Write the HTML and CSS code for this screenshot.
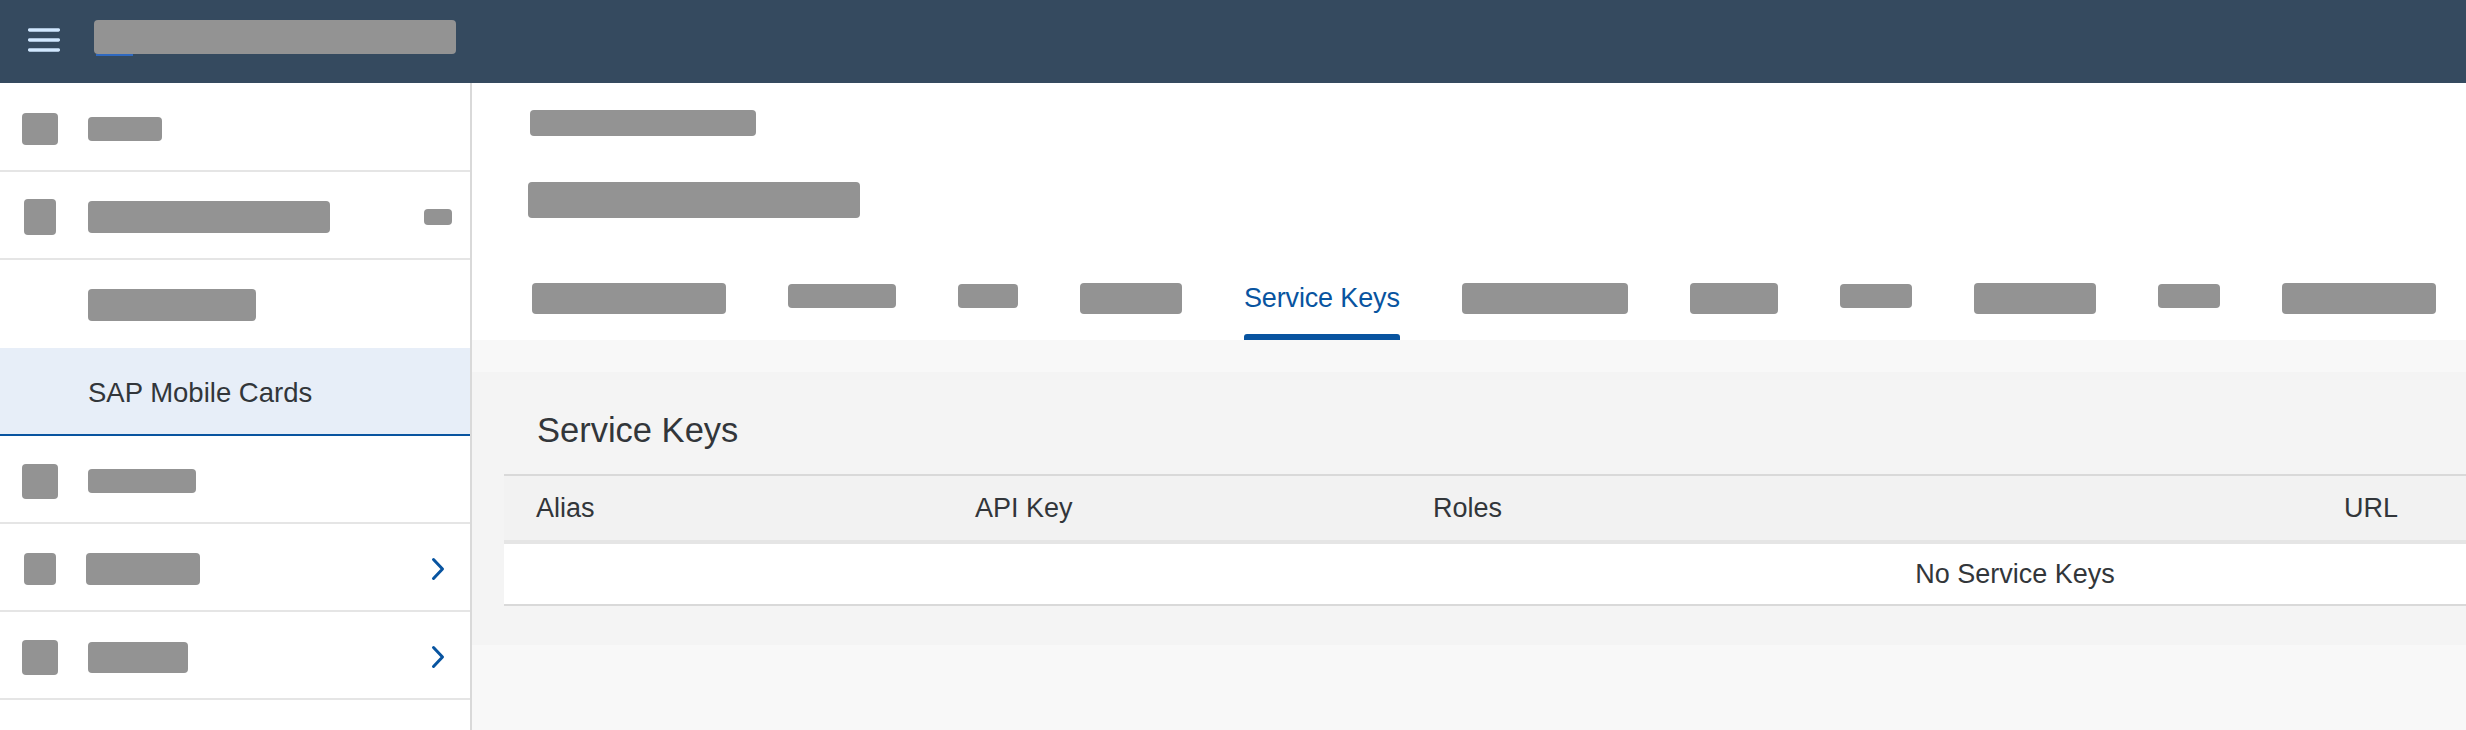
FILE: index.html
```html
<!DOCTYPE html>
<html lang="en">
<head>
<meta charset="utf-8">
<title>Service Keys</title>
<link rel="stylesheet" href="styles.css">
</head>
<body>
<header class="shell">
  <button class="burger" aria-label="Menu">
    <svg width="32" height="24" viewBox="0 0 32 24"><path d="M1.6 2H30.4M1.6 12H30.4M1.6 22H30.4" fill="none" stroke="#d1e8ff" stroke-width="3.3" stroke-linecap="round"/></svg>
  </button>
  <div class="shell-title">
    <span class="ph ph-shell"></span>
    <span class="shell-underline"></span>
  </div>
</header>
<div class="layout">
  <nav class="side">
    <div class="nav-item">
      <span class="nav-icon"><span class="ph i-a"></span></span>
      <span class="ph t1"></span>
    </div>
    <div class="nav-item">
      <span class="nav-icon"><span class="ph i-b"></span></span>
      <span class="ph t2"></span>
      <span class="nav-end"><span class="ph badge"></span></span>
    </div>
    <div class="nav-item child">
      <span class="nav-icon"></span>
      <span class="ph t3"></span>
    </div>
    <div class="nav-item selected">
      <span class="nav-icon"></span>
      <span class="nav-text">SAP Mobile Cards</span>
    </div>
    <div class="nav-item">
      <span class="nav-icon"><span class="ph i-c"></span></span>
      <span class="ph t5"></span>
    </div>
    <div class="nav-item">
      <span class="nav-icon"><span class="ph i-d"></span></span>
      <span class="ph t6"></span>
      <span class="nav-end"><svg class="chev" width="14" height="24" viewBox="0 0 14 24"><path d="M2.5 2.5L11.5 12L2.5 21.5" fill="none" stroke="#0854a0" stroke-width="3" stroke-linecap="round" stroke-linejoin="round"/></svg></span>
    </div>
    <div class="nav-item">
      <span class="nav-icon"><span class="ph i-c"></span></span>
      <span class="ph t7"></span>
      <span class="nav-end"><svg class="chev" width="14" height="24" viewBox="0 0 14 24"><path d="M2.5 2.5L11.5 12L2.5 21.5" fill="none" stroke="#0854a0" stroke-width="3" stroke-linecap="round" stroke-linejoin="round"/></svg></span>
    </div>
  </nav>
  <main class="main">
    <section class="page-head">
      <div class="ph ph-title1"></div>
      <div class="ph ph-title2"></div>
      <div class="tabs">
        <div class="tab"><span class="ph tall w194"></span></div>
        <div class="tab"><span class="ph short w108"></span></div>
        <div class="tab"><span class="ph short w60"></span></div>
        <div class="tab"><span class="ph tall w103"></span></div>
        <div class="tab active"><span class="tab-text">Service Keys</span></div>
        <div class="tab"><span class="ph tall w166"></span></div>
        <div class="tab"><span class="ph tall w88"></span></div>
        <div class="tab"><span class="ph short w72"></span></div>
        <div class="tab"><span class="ph tall w122"></span></div>
        <div class="tab"><span class="ph short w62"></span></div>
        <div class="tab"><span class="ph tall w154"></span></div>
      </div>
    </section>
    <section class="panel">
      <h2 class="sec-title">Service Keys</h2>
      <table class="keys">
        <colgroup>
          <col class="c-alias"><col class="c-api"><col class="c-roles"><col class="c-url">
        </colgroup>
        <thead>
          <tr><th>Alias</th><th>API Key</th><th>Roles</th><th>URL</th></tr>
        </thead>
        <tbody>
          <tr><td class="empty" colspan="4">No Service Keys</td></tr>
        </tbody>
      </table>
    </section>
  </main>
</div>
</body>
</html>
```
FILE: styles.css
```css
html, body {
  margin: 0;
  padding: 0;
  height: 100%;
  overflow: hidden;
}
body {
  font-family: "Liberation Sans", Arial, sans-serif;
  color: #32363a;
  background: #f8f8f8;
}

.ph {
  display: block;
  background: #939393;
  border-radius: 4px;
  flex: none;
}

/* Shell header */
.shell {
  height: 83px;
  background: #354a5f;
  display: flex;
  align-items: flex-start;
  padding-left: 28px;
  box-sizing: border-box;
}
.burger {
  border: 0;
  padding: 0;
  margin: 28px 0 0 0;
  background: none;
  width: 32px;
  height: 24px;
  display: block;
}
.burger svg { display: block; }
.shell-title {
  margin: 20px 0 0 34px;
  display: flex;
  flex-direction: column;
}
.ph-shell { width: 362px; height: 34px; }
.shell-underline {
  width: 37px;
  height: 2px;
  margin-left: 2px;
  background: #2f69c0;
}

/* Layout */
.layout {
  display: flex;
  height: calc(100vh - 83px);
}

/* Side navigation */
.side {
  width: 470px;
  flex: none;
  background: #fff;
  border-right: 2px solid #d9d9d9;
  padding-top: 1px;
}
.nav-item {
  box-sizing: border-box;
  height: 88px;
  border-bottom: 2px solid #e5e5e5;
  padding: 4px 18px 0 22px;
  display: flex;
  align-items: center;
}
.nav-item.child { border-bottom-color: transparent; }
.nav-item.selected {
  background: #e7eef8;
  border-bottom-color: #0854a0;
}
.nav-icon {
  width: 36px;
  margin-right: 30px;
  display: flex;
  justify-content: center;
  flex: none;
}
.nav-text {
  font-size: 27.5px;
  line-height: 32px;
  color: #32363a;
}
.nav-end {
  margin-left: auto;
  width: 28px;
  display: flex;
  justify-content: center;
}
.chev { display: block; }

.i-a { width: 36px; height: 32px; }
.i-b { width: 32px; height: 36px; }
.i-c { width: 36px; height: 35px; }
.i-d { width: 32px; height: 32px; }
.t1 { width: 74px; height: 24px; }
.t2 { width: 242px; height: 32px; }
.t3 { width: 168px; height: 32px; }
.t5 { width: 108px; height: 24px; }
.t6 { width: 114px; height: 32px; margin-left: -2px; }
.t7 { width: 100px; height: 31px; }
.badge { width: 28px; height: 16px; border-radius: 4px; }

/* Main */
.main {
  flex: 1;
  min-width: 0;
  overflow: hidden;
  background: #f8f8f8;
}
.page-head {
  background: #fff;
  padding-top: 27px;
}
.ph-title1 {
  width: 226px;
  height: 26px;
  margin-left: 58px;
}
.ph-title2 {
  width: 332px;
  height: 36px;
  margin: 46px 0 0 56px;
}
.tabs {
  display: flex;
  gap: 62px;
  padding-left: 60px;
  margin-top: 64px;
  white-space: nowrap;
}
.tab {
  height: 58px;
  display: flex;
  flex-direction: column;
  flex: none;
}
.tab .tall { height: 31px; margin-top: 1px; }
.tab .short { height: 24px; margin-top: 2px; }
.tab-text {
  font-size: 27px;
  line-height: 32px;
  color: #0854a0;
  letter-spacing: -0.15px;
}
.tab.active::after {
  content: "";
  margin-top: auto;
  height: 6px;
  background: #0854a0;
  border-radius: 3px 3px 0 0;
}
.w194 { width: 194px; }
.w108 { width: 108px; }
.w60 { width: 60px; }
.w103 { width: 102px; }
.w166 { width: 166px; }
.w88 { width: 88px; }
.w72 { width: 72px; }
.w122 { width: 122px; }
.w62 { width: 62px; }
.w154 { width: 154px; }

/* Section panel */
.panel {
  margin-top: 32px;
  background: #f4f4f4;
  padding: 38px 0 39px 32px;
}
.sec-title {
  margin: 0 0 24px 33px;
  font-weight: normal;
  font-size: 34.5px;
  line-height: 40px;
  color: #32363a;
}
.keys {
  border-collapse: separate;
  border-spacing: 0;
  table-layout: fixed;
  width: 3022px;
  font-size: 27px;
  line-height: 32px;
}
.c-alias { width: 439px; }
.c-api { width: 458px; }
.c-roles { width: 911px; }
.c-url { width: 1214px; }
.keys th {
  background: #f2f2f2;
  border-top: 2px solid #d9d9d9;
  border-bottom: 4px solid #e5e5e5;
  padding: 16px 0 16px 32px;
  font-weight: normal;
  text-align: left;
  color: #32363a;
}
.keys td {
  background: #fff;
  border-bottom: 2px solid #d9d9d9;
  padding: 14px 0;
}
.keys td.empty { text-align: center; }
```
